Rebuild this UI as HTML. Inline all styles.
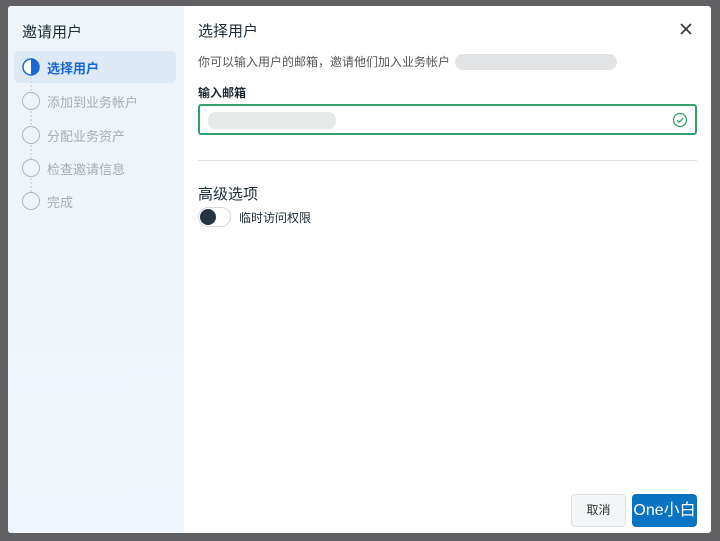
<!DOCTYPE html>
<html><head><meta charset="utf-8"><style>
*{margin:0;padding:0;box-sizing:border-box}
body{width:720px;height:541px;background:#606062;font-family:"Liberation Sans","Noto Sans CJK SC",sans-serif;position:relative;overflow:hidden}
.m{position:absolute;left:8px;top:6px;width:703px;height:527px;background:#fff;border-radius:3px;overflow:hidden}
.sb{position:absolute;left:0;top:0;width:176px;height:527px;background:linear-gradient(180deg,#eef4f8,#f0f6fd)}
.t{position:absolute;font-size:14px;color:#1c2b33}
.st{position:absolute;left:6px;width:162px;height:32px;font-size:13px;color:#a8adb2;display:flex;align-items:center;padding-left:8px}
.st .c{width:18px;height:18px;border:1.5px solid #b3b6ba;border-radius:50%;margin-right:7px;flex:none}
.dot{position:absolute;left:22px;width:2px;height:14px;border-left:2px dotted #d8dde2}
</style></head><body>
<div class="m">
 <div class="sb">
  <div class="t" style="left:14px;top:15px;font-size:15px">邀请用户</div>
  <div class="st" style="top:45px;background:#dde9f4;border-radius:5px;color:#1768cf;font-weight:bold">
   <svg width="18" height="18" style="margin-right:7px;flex:none"><circle cx="9" cy="9" r="8" fill="#fff" stroke="#1768cf" stroke-width="1.5"/><path d="M9 1a8 8 0 0 1 0 16z" fill="#1768cf"/></svg>选择用户</div>
  <div class="dot" style="top:71px"></div>
  <div class="st" style="top:79px"><span class="c"></span>添加到业务帐户</div>
  <div class="dot" style="top:105px"></div>
  <div class="st" style="top:113px"><span class="c"></span>分配业务资产</div>
  <div class="dot" style="top:139px"></div>
  <div class="st" style="top:146px"><span class="c"></span>检查邀请信息</div>
  <div class="dot" style="top:172px"></div>
  <div class="st" style="top:179px"><span class="c"></span>完成</div>
 </div>
 <div class="t" style="left:190px;top:14px;font-size:15px">选择用户</div>
 <svg style="position:absolute;left:672px;top:17px" width="12" height="12"><path d="M1 1L11 11M11 1L1 11" stroke="#333" stroke-width="1.6"/></svg>
 <div class="t" style="left:190px;top:47px;font-size:12px;color:#555">你可以输入用户的邮箱，邀请他们加入业务帐户</div>
 <div style="position:absolute;left:447px;top:48px;width:162px;height:16px;background:#e2e3e4;border-radius:8px"></div>
 <div class="t" style="left:190px;top:78px;font-size:12px;font-weight:bold">输入邮箱</div>
 <div style="position:absolute;left:190px;top:98px;width:499px;height:31px;border:2px solid #33a06b;border-radius:3px">
  <div style="position:absolute;left:8px;top:6px;width:128px;height:17px;background:#e6e9e8;border-radius:8px"></div>
  <svg style="position:absolute;right:7px;top:6px" width="16" height="16"><circle cx="8" cy="8" r="6.5" fill="none" stroke="#33a06b" stroke-width="1.3"/><path d="M5 8.2l2 2 4-4" fill="none" stroke="#33a06b" stroke-width="1.3"/></svg>
 </div>
 <div style="position:absolute;left:190px;top:154px;width:499px;height:1px;background:#dcdfe2"></div>
 <div class="t" style="left:190px;top:177px;font-size:15px">高级选项</div>
 <div style="position:absolute;left:190px;top:201px;width:33px;height:20px;border:1px solid #d5d8dc;border-radius:10px"><div style="position:absolute;left:1px;top:1px;width:16px;height:16px;border-radius:50%;background:#263440"></div></div>
 <div class="t" style="left:231px;top:203px;font-size:12px">临时访问权限</div>
 <div style="position:absolute;left:563px;top:488px;width:55px;height:33px;background:#f3f5f7;border:1px solid #dde0e3;border-radius:4px;font-size:12px;color:#333;text-align:center;line-height:31px">取消</div>
 <div style="position:absolute;left:624px;top:488px;width:65px;height:33px;background:#0a74c2;border-radius:4px;color:#fff;font-size:16px;text-align:center;line-height:33px">One小白</div>
</div>
</body></html>
